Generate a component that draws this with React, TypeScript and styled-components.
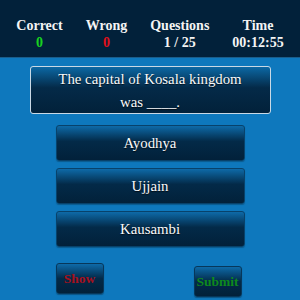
import React from 'react'
import styled, { createGlobalStyle } from 'styled-components'

const GlobalStyle = createGlobalStyle`
  html, body {
    margin: 0;
    padding: 0;
    background: #0e78bd;
  }
  body {
    font-family: "Liberation Serif", "Times New Roman", serif;
  }
`

const Page = styled.div`
  width: 300px;
  height: 300px;
  background: #0e78bd;
  display: flex;
  flex-direction: column;
  align-items: center;
  overflow: hidden;
`

const Header = styled.div`
  box-sizing: border-box;
  width: 100%;
  height: 58px;
  background: #02213a;
  border-bottom: 1px solid #1b5d8a;
  display: flex;
  justify-content: center;
  gap: 23px;
  padding-top: 18px;
`

const Stat = styled.div`
  display: flex;
  flex-direction: column;
  align-items: center;
`

const StatLabel = styled.div`
  color: #f4f4f4;
  font-weight: bold;
  font-size: 14px;
  line-height: 16px;
`

const StatValue = styled.div<{ $color?: string }>`
  color: ${(p) => p.$color || '#f4f4f4'};
  font-weight: bold;
  font-size: 14px;
  line-height: 17px;
`

const QuestionBox = styled.div`
  box-sizing: border-box;
  width: 241px;
  height: 48px;
  margin-top: 8px;
  border: 1px solid #c9d9e6;
  border-radius: 3px;
  background: linear-gradient(#0c68a4 0%, #042a48 45%, #02213a 100%);
  color: #fafafa;
  font-size: 14.8px;
  line-height: 23px;
  text-align: center;
  padding-top: 1px;
  text-shadow: 0 1px 1px rgba(0, 0, 0, 0.7);
`

const Options = styled.div`
  display: flex;
  flex-direction: column;
  gap: 7px;
  margin-top: 11px;
`

const Option = styled.button`
  box-sizing: border-box;
  width: 189px;
  height: 36px;
  margin: 0;
  padding: 0;
  border: 1px solid #08426b;
  border-radius: 3px;
  background: linear-gradient(#0e6aa8 0%, #032a48 45%, #02213a 100%);
  color: #fafafa;
  font-family: "Liberation Serif", "Times New Roman", serif;
  font-size: 14.8px;
  text-shadow: 0 1px 1px rgba(0, 0, 0, 0.7);
  box-shadow: 0 1px 1px rgba(0, 0, 0, 0.25);
  cursor: pointer;
`

const Actions = styled.div`
  box-sizing: border-box;
  width: 189px;
  display: flex;
  justify-content: space-between;
  align-items: flex-start;
  padding-right: 3px;
  margin-top: 16px;
`

const ActionButton = styled.button<{ $color: string; $drop?: number }>`
  box-sizing: border-box;
  width: 48px;
  height: 31px;
  margin: ${(p) => p.$drop || 0}px 0 0;
  padding: 0;
  border: 1px solid #07375a;
  border-radius: 3px;
  background: linear-gradient(#0e6aa8 0%, #032a48 50%, #02213a 100%);
  color: ${(p) => p.$color};
  font-family: "Liberation Serif", "Times New Roman", serif;
  font-weight: bold;
  font-size: 13.5px;
  box-shadow: 0 1px 1px rgba(0, 0, 0, 0.3);
  cursor: pointer;
`

const options = ['Ayodhya', 'Ujjain', 'Kausambi']

export default function App() {
  return (
    <Page>
      <GlobalStyle />
      <Header>
        <Stat>
          <StatLabel>Correct</StatLabel>
          <StatValue $color="#19d21f">0</StatValue>
        </Stat>
        <Stat>
          <StatLabel>Wrong</StatLabel>
          <StatValue $color="#e0101a">0</StatValue>
        </Stat>
        <Stat>
          <StatLabel>Questions</StatLabel>
          <StatValue>1 / 25</StatValue>
        </Stat>
        <Stat>
          <StatLabel>Time</StatLabel>
          <StatValue>00:12:55</StatValue>
        </Stat>
      </Header>
      <QuestionBox>
        The capital of Kosala kingdom
        <br />
        was ____.
      </QuestionBox>
      <Options>
        {options.map((o) => (
          <Option key={o}>{o}</Option>
        ))}
      </Options>
      <Actions>
        <ActionButton $color="#a8101c">Show</ActionButton>
        <ActionButton $color="#0e8a1c" $drop={3}>
          Submit
        </ActionButton>
      </Actions>
    </Page>
  )
}
